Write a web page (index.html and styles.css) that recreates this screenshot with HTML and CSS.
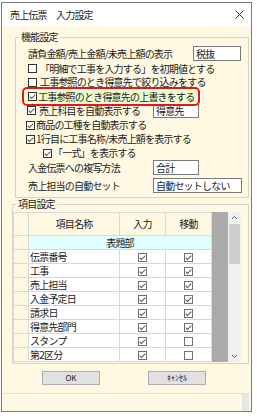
FILE: index.html
```html
<!DOCTYPE html>
<html lang="ja">
<head>
    <meta charset="UTF-8">
    <title>売上伝票　入力設定</title>
    <link rel="stylesheet" href="styles.css">
</head>
<body>
<div class="window">
    <div class="titlebar">
        <span class="title">売上伝票　入力設定</span>
        <svg class="close" width="9" height="9" viewBox="0 0 9 9"><path d="M0.5 0.5L8.5 8.5M8.5 0.5L0.5 8.5" stroke="#333" stroke-width="1"/></svg>
    </div>

    <div class="client">
        <!-- 機能設定 -->
        <fieldset class="group func">
            <legend>機能設定</legend>
            <div class="row tall first">
                <span>請負金額/売上金額/未売上額の表示</span>
                <span class="box box-top">税抜</span>
            </div>
            <div class="row tall"><span class="cb"></span><span class="txt">「明細で工事を入力する」を初期値とする</span></div>
            <div class="row short"><span class="cb"></span><span class="txt">工事参照のとき得意先で絞り込みをする</span></div>
            <div class="row mark"><span class="cb on"></span><span class="txt tight">工事参照のとき得意先の上書きをする</span></div>
            <div class="row tall under-mark"><span class="cb on"></span><span class="txt">売上科目を自動表示する</span><span class="box box-mid">得意先</span></div>
            <div class="row narrow"><span class="cb on"></span><span class="txt tight">商品の工種を自動表示する</span></div>
            <div class="row narrow"><span class="cb on"></span><span class="txt tight">1行目に工事名称/未売上額を表示する</span></div>
            <div class="row indent"><span class="cb on"></span><span class="txt tight">「一式」を表示する</span></div>
            <div class="row tall"><span>入金伝票への複写方法</span><span class="box box-mid">合計</span></div>
            <div class="row tall spaced"><span>売上担当の自動セット</span><span class="box box-wide">自動セットしない</span></div>
        </fieldset>

        <!-- 項目設定 -->
        <fieldset class="group items">
            <legend>項目設定</legend>
            <div class="grid">
                <table class="item-table">
                    <colgroup>
                        <col class="c-rh"><col class="c-name"><col class="c-chk"><col class="c-chk">
                    </colgroup>
                    <tr class="head"><th class="rh"></th><th>項目名称</th><th>入力</th><th>移動</th></tr>
                    <tr class="section"><td class="rh"></td><td class="sec" colspan="3">表題部</td></tr>
                    <tr><td class="rh"></td><td class="name">伝票番号</td><td class="chk"><span class="cb gray on"></span></td><td class="chk"><span class="cb gray on"></span></td></tr>
                    <tr><td class="rh"></td><td class="name">工事</td><td class="chk"><span class="cb gray on"></span></td><td class="chk"><span class="cb gray on"></span></td></tr>
                    <tr><td class="rh"></td><td class="name">売上担当</td><td class="chk"><span class="cb gray on"></span></td><td class="chk"><span class="cb gray on"></span></td></tr>
                    <tr><td class="rh"></td><td class="name">入金予定日</td><td class="chk"><span class="cb gray on"></span></td><td class="chk"><span class="cb gray on"></span></td></tr>
                    <tr><td class="rh"></td><td class="name">請求日</td><td class="chk"><span class="cb gray on"></span></td><td class="chk"><span class="cb gray on"></span></td></tr>
                    <tr><td class="rh"></td><td class="name">得意先部門</td><td class="chk"><span class="cb gray on"></span></td><td class="chk"><span class="cb gray on"></span></td></tr>
                    <tr><td class="rh"></td><td class="name">スタンプ</td><td class="chk"><span class="cb gray on"></span></td><td class="chk"><span class="cb gray"></span></td></tr>
                    <tr><td class="rh"></td><td class="name">第2区分</td><td class="chk"><span class="cb gray on"></span></td><td class="chk"><span class="cb gray"></span></td></tr>
                </table>
                <div class="empty"></div>
                <div class="vscroll">
                    <svg class="arrow" width="13" height="12" viewBox="0 0 13 12"><path d="M4 7L6.5 4.5L9 7" fill="none" stroke="#606060" stroke-width="1"/></svg>
                    <div class="thumb"></div>
                    <div class="track"></div>
                    <svg class="arrow" width="13" height="12" viewBox="0 0 13 12"><path d="M4 5L6.5 7.5L9 5" fill="none" stroke="#606060" stroke-width="1"/></svg>
                </div>
            </div>
        </fieldset>

        <div class="buttons">
            <button class="btn">OK</button>
            <button class="btn">ｷｬﾝｾﾙ</button>
        </div>
    </div>

    <div class="statusbar">
        <div class="grip"></div>
    </div>
</div>
</body>
</html>
```

FILE: styles.css
```css
body {
    margin: 0;
    background-color: #fff;
    font-family: "Noto Sans CJK JP", sans-serif;
    font-size: 10px;
    letter-spacing: -0.8px;
    color: #1a1a1a;
}
.window {
    margin: 2px 0 0 1px;
    width: 251px;
    height: 410px;
    box-sizing: border-box;
    border: 1px solid #7a7a7a;
    background-color: #fff9e3;
    display: flex;
    flex-direction: column;
}
.titlebar {
    height: 23px;
    flex: none;
    background-color: #fff;
    display: flex;
    align-items: center;
    justify-content: space-between;
    padding: 0 7px 0 8px;
}
.client {
    flex: 1;
    padding-top: 5px;
}

/* group boxes */
.group {
    margin: 0;
    padding: 0;
    min-width: 0;
    border: 1px solid #d6d3c8;
    box-sizing: border-box;
}
.group legend {
    padding: 0 2px;
    margin-left: 3px;
    line-height: 12px;
}
.func {
    margin-left: 13px;
    width: 234px;
    padding: 3px 0 4px 0;
}
.items {
    margin-left: 10px;
    width: 237px;
    padding: 2px 6px 1px 0;
}

/* setting rows */
.row {
    display: flex;
    align-items: center;
    height: 14px;
    line-height: 12px;
    padding-left: 12px;
    white-space: nowrap;
}
.row.tall { height: 15px; }
.row.short { height: 12px; }
.row.narrow { padding-left: 10px; }
.row.indent { padding-left: 27px; }
.row.spaced { margin-top: 3px; }
.row .txt { margin-left: 3px; }
.row .txt.tight { margin-left: 1px; }
.row.mark {
    position: relative;
    z-index: 1;
    margin: -1px 0 0 6px;
    width: 178px;
    height: 19px;
    box-sizing: border-box;
    padding-left: 4px;
    border: 2px solid #e5151e;
    border-radius: 5px;
    background-color: #ecffd2;
}
.row.under-mark {
    margin-top: -3px;
    padding-left: 11px;
}

.box {
    height: 15px;
    box-sizing: border-box;
    border: 1px solid #7a7a7a;
    background-color: #fff;
    line-height: 13px;
    padding-left: 2px;
    margin-left: auto;
}
.box-top { width: 48px; margin-right: 7px; }
.box-mid { width: 46px; margin-right: 49px; }
.box-wide { width: 89px; margin-right: 6px; }

/* checkboxes */
.cb {
    display: inline-block;
    flex: none;
    width: 9px;
    height: 9px;
    box-sizing: border-box;
    border: 1px solid #333;
    background-color: #fff;
    position: relative;
    vertical-align: middle;
}
.cb.gray { border-color: #707070; }
.cb.on::after {
    content: "";
    position: absolute;
    left: 2px;
    top: 0;
    width: 2px;
    height: 5px;
    border: solid #555;
    border-width: 0 1px 1px 0;
    transform: rotate(45deg);
}

/* item grid */
.grid {
    display: flex;
    align-items: stretch;
    width: 228px;
}
.item-table {
    border-collapse: collapse;
    table-layout: fixed;
    width: 198px;
    border: 1px solid #b8b8b8;
}
.c-rh { width: 15px; }
.c-name { width: 91px; }
.c-chk { width: 46px; }
.item-table th,
.item-table td {
    border: 1px solid #d8d8d8;
    padding: 0;
    height: 13px;
    line-height: 12px;
    font-weight: normal;
}
.item-table th {
    height: 22px;
    background-color: #fff9e3;
}
.item-table .rh { background-color: #fff9e3; }
.item-table .name {
    background-color: #fff;
    padding-left: 1px;
}
.item-table .chk {
    background-color: #fff;
    text-align: center;
}
.item-table .sec {
    background-color: #e0ffff;
    text-align: center;
}
.empty {
    width: 17px;
    background-color: #ababab;
}
.vscroll {
    width: 13px;
    background-color: #f0f0f0;
    display: flex;
    flex-direction: column;
}
.arrow { flex: none; display: block; }
.thumb {
    height: 40px;
    margin: 0 1px;
    background-color: #cdcdcd;
}
.track { flex: 1; }

/* buttons */
.buttons {
    display: flex;
    gap: 48px;
    margin: 7px 0 0 40px;
}
.btn {
    width: 58px;
    height: 14px;
    padding: 0;
    border: 1px solid #adadad;
    background-color: #e1e1e1;
    font-family: "Noto Sans CJK JP", sans-serif;
    font-size: 8px;
    letter-spacing: 0;
    line-height: 12px;
    color: #222;
}

.statusbar {
    height: 17px;
    flex: none;
    border-top: 1px solid #e2dfd4;
    display: flex;
    justify-content: flex-end;
}
.grip {
    width: 7px;
    margin-right: 2px;
    background-color: #e6e6e6;
}
```
